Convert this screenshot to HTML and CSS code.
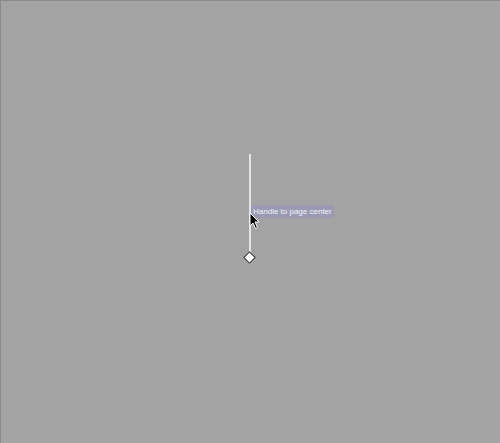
FILE: index.html
```html
<!DOCTYPE html>
<html>
<head>
<meta charset="utf-8">
<link rel="stylesheet" href="styles.css">
</head>
<body>
<div class="canvas">
  <div class="handle-line"></div>
  <div class="handle-knob"></div>
  <div class="tooltip">Handle to page center</div>
  <svg class="cursor" width="12" height="18" viewBox="0 0 12 18">
    <path d="M1 1 L1 14 L4 11 L6.5 16.5 L8.5 15.5 L6 10 L10 10 Z" fill="#000" stroke="#fff" stroke-width="1"/>
  </svg>
</div>
</body>
</html>
```
FILE: styles.css
```css
html, body {
  margin: 0;
  padding: 0;
  width: 500px;
  height: 443px;
  overflow: hidden;
  background: #a3a3a3;
  font-family: "Liberation Sans", Arial, sans-serif;
}
.canvas {
  position: relative;
  width: 499px;
  height: 442px;
  background: #a3a3a3;
  border-top: 1px solid #8a8a8a;
  border-left: 1px solid #8a8a8a;
}
.handle-line {
  position: absolute;
  left: 248px;
  top: 153px;
  width: 2px;
  height: 100px;
  background: #e4e4e4;
}
.handle-knob {
  position: absolute;
  left: 244px;
  top: 252px;
  width: 7px;
  height: 7px;
  background: #ffffff;
  border: 1px solid #222;
  transform: rotate(45deg);
}
.tooltip {
  position: absolute;
  left: 250px;
  top: 204px;
  height: 13px;
  line-height: 13px;
  padding: 0 2px;
  background: #9a9ab4;
  color: #f2f2f6;
  font-size: 8px;
  white-space: nowrap;
}
.cursor {
  position: absolute;
  left: 248px;
  top: 211px;
}
```
